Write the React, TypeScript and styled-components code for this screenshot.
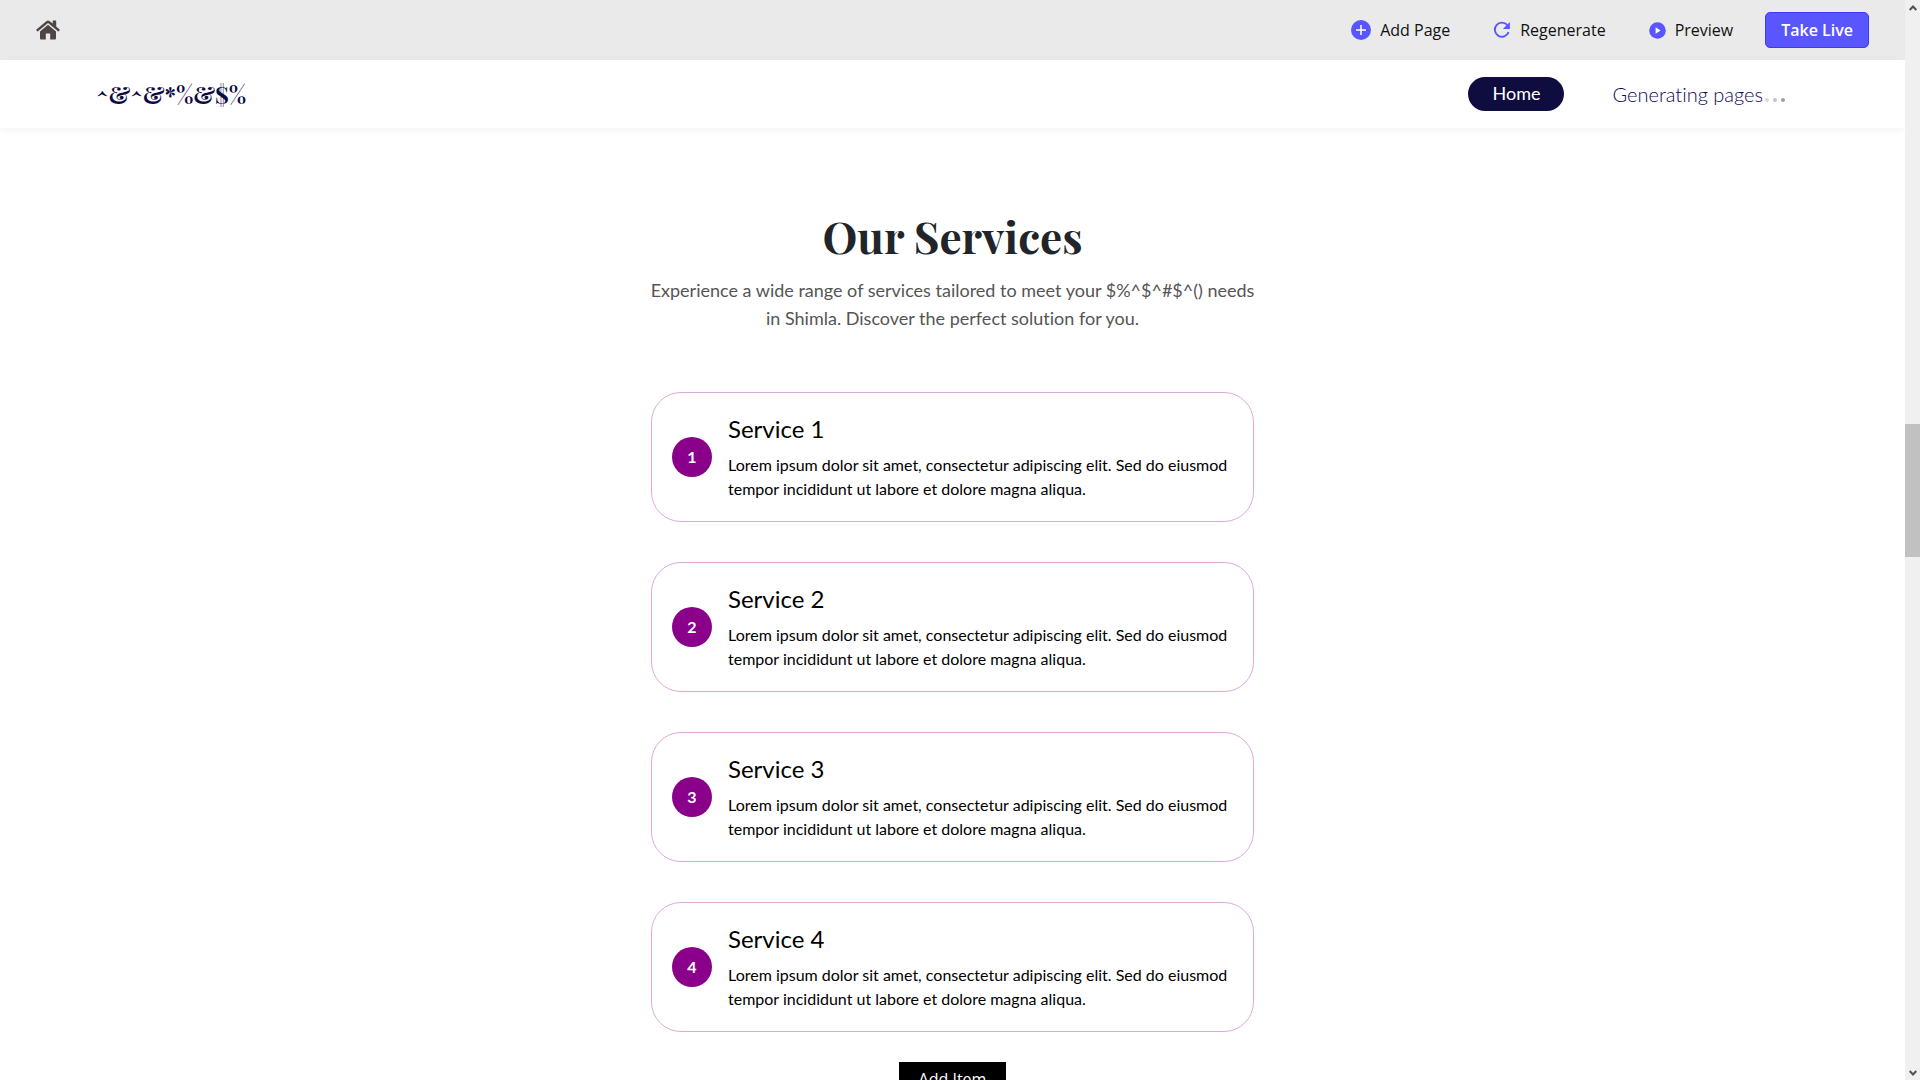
import React from "react";
import styled, { createGlobalStyle } from "styled-components";

const GlobalStyle = createGlobalStyle`
  *, *::before, *::after { box-sizing: border-box; }
  body {
    margin: 0;
    background: #fff;
    color: #000;
    font-family: Lato, "Open Sans", sans-serif;
    font-size: 16px;
    font-variant-ligatures: none;
    line-height: 24px;
  }
  h1, h2, p, ol { margin: 0; padding: 0; }
`;

const Shell = styled.div`
  display: grid;
  grid-template-columns: minmax(0, 1fr) 15px;
  height: 100vh;
  overflow: hidden;
`;

const Page = styled.div`
  display: flex;
  flex-direction: column;
  min-height: 0;
  overflow: hidden;
`;

const Toolbar = styled.header`
  flex: none;
  display: flex;
  align-items: center;
  justify-content: space-between;
  height: 60px;
  padding: 0 36px;
  background: #eaeaea;
`;

const HomeLink = styled.a`
  display: flex;
  color: #4f4545;
`;

const Actions = styled.div`
  display: flex;
  align-items: center;
  gap: 32px;
`;

const Tools = styled.div`
  display: flex;
  align-items: center;
  gap: 43px;
`;

const ToolButton = styled.button`
  display: flex;
  align-items: center;
  gap: 9px;
  padding: 0;
  border: 0;
  background: none;
  color: #111;
  font: 400 16px/24px "Open Sans", sans-serif;
`;

const LiveButton = styled.button`
  height: 36px;
  padding: 0 15px;
  border: 1px solid #4338f5;
  border-radius: 5px;
  background: #5956ff;
  color: #fff;
  font: 600 16px/24px "Open Sans", sans-serif;
`;

const SiteNav = styled.nav`
  flex: none;
  display: flex;
  align-items: center;
  justify-content: space-between;
  height: 68px;
  padding: 0 120px 0 96px;
  background: #fff;
  box-shadow: 0 2px 8px rgba(0, 0, 0, 0.05);
`;

const Brand = styled.a`
  color: #0d0a42;
  font: 700 24px/32px "Playfair Display", "Liberation Serif", serif;
  text-decoration: none;
`;

const NavItems = styled.div`
  display: flex;
  align-items: center;
  gap: 48px;
`;

const NavPill = styled.a`
  padding: 4px 24px 6px;
  border-radius: 17px;
  background: #0f0c40;
  color: #fff;
  font-size: 18px;
  line-height: 24px;
  text-decoration: none;
`;

const Status = styled.span`
  display: flex;
  align-items: baseline;
  gap: 2px;
  color: #0d0a52;
  font-size: 20px;
  font-weight: 300;
  line-height: 28px;
`;

const Dots = styled.span`
  display: flex;
  gap: 4px;
`;

const Dot = styled.i<{ $opacity: number }>`
  width: 4px;
  height: 4px;
  border-radius: 50%;
  background: #0d0a42;
  opacity: ${(p) => p.$opacity};
`;

const Services = styled.main`
  display: flex;
  flex-direction: column;
  align-items: center;
  padding: 76px 24px 0;
`;

const Title = styled.h1`
  color: #212529;
  font: 700 44px/64px "Playfair Display", "Liberation Serif", serif;
`;

const Intro = styled.p`
  max-width: 612px;
  margin-top: 8px;
  color: #555;
  font-size: 18px;
  line-height: 28px;
  text-align: center;
`;

const List = styled.ol`
  display: flex;
  flex-direction: column;
  gap: 40px;
  width: 100%;
  max-width: 603px;
  margin: 60px 0 30px;
  list-style: none;
`;

const Card = styled.li`
  display: flex;
  align-items: center;
  gap: 16px;
  padding: 20px;
  border: 1px solid #dda9dd;
  border-radius: 30px;
`;

const Badge = styled.span`
  flex: none;
  display: grid;
  place-items: center;
  width: 40px;
  height: 40px;
  border-radius: 50%;
  background: #8b008b;
  color: #fff;
  font-weight: 700;
`;

const CardTitle = styled.h2`
  margin-bottom: 8px;
  font-size: 24px;
  font-weight: 400;
  line-height: 32px;
`;

const AddButton = styled.button`
  padding: 5px 20px;
  border: 0;
  background: #000;
  color: #fff;
  font: 400 16px/24px "Open Sans", sans-serif;
`;

const ScrollTrack = styled.div`
  display: grid;
  grid-template-rows: 15px 409fr 133px 508fr 15px;
  justify-items: center;
  align-items: center;
  background: #f0f0f0;
  color: #505050;
`;

const ScrollThumb = styled.div`
  grid-row: 3;
  width: 100%;
  height: 100%;
  background: #c1c1c1;
`;

const ArrowUp = styled.svg`
  grid-row: 1;
`;

const ArrowDown = styled.svg`
  grid-row: 5;
`;

const services = ["Service 1", "Service 2", "Service 3", "Service 4"];

const HouseIcon = () => (
  <svg width="24" height="20" viewBox="0 0 24 20" fill="currentColor" aria-hidden="true">
    <path d="M12 4.7 4 11.4V18.6Q4 19.5 5 19.5H9.8V13.5H14.2V19.5H19Q20 19.5 20 18.6V11.4Z" />
    <path d="M23.6 9.5 20.2 6.6V.8Q20.2.4 19.7.4H17.2Q16.7.4 16.7.8V3.6L13.4.9Q12 0 10.6.9L.4 9.5Q0 9.9.4 10.3L1.2 11.2Q1.6 11.6 2 11.2L12 2.9 22 11.2Q22.4 11.6 22.8 11.2L23.6 10.3Q24 9.9 23.6 9.5Z" />
  </svg>
);

const PlusIcon = () => (
  <svg width="20" height="20" viewBox="0 0 20 20" aria-hidden="true">
    <circle cx="10" cy="10" r="10" fill="#5956ff" />
    <path d="M10 5v10M5 10h10" stroke="#fff" strokeWidth="1.5" />
  </svg>
);

const RefreshIcon = () => (
  <svg width="18" height="18" viewBox="0 0 18 18" aria-hidden="true">
    <path d="M14.3 4A7.1 7.1 0 1 0 15.6 11.2" fill="none" stroke="#5956ff" strokeWidth="1.9" />
    <path d="M16.9 1V8H9.9Z" fill="#5956ff" />
  </svg>
);

const PlayIcon = () => (
  <svg width="17" height="17" viewBox="0 0 17 17" aria-hidden="true">
    <circle cx="8.5" cy="8.5" r="8.3" fill="#5956ff" />
    <path d="M6.6 5.2v6.6l5-3.3z" fill="#fff" />
  </svg>
);

export default function App() {
  return (
    <Shell>
      <GlobalStyle />
      <Page>
        <Toolbar>
          <HomeLink href="#" aria-label="Dashboard"><HouseIcon /></HomeLink>
          <Actions>
            <Tools>
              <ToolButton type="button"><PlusIcon />Add Page</ToolButton>
              <ToolButton type="button"><RefreshIcon />Regenerate</ToolButton>
              <ToolButton type="button"><PlayIcon />Preview</ToolButton>
            </Tools>
            <LiveButton type="button">Take Live</LiveButton>
          </Actions>
        </Toolbar>
        <SiteNav>
          <Brand href="#">^&amp;^&amp;*%&amp;$%</Brand>
          <NavItems>
            <NavPill href="#">Home</NavPill>
            <Status>
              Generating pages
              <Dots aria-hidden="true">
                <Dot $opacity={0.15} />
                <Dot $opacity={0.25} />
                <Dot $opacity={0.4} />
              </Dots>
            </Status>
          </NavItems>
        </SiteNav>
        <Services>
          <Title>Our Services</Title>
          <Intro>
            Experience a wide range of services tailored to meet your $%^$^#$^() needs
            in Shimla. Discover the perfect solution for you.
          </Intro>
          <List>
            {services.map((name, i) => (
              <Card key={name}>
                <Badge>{i + 1}</Badge>
                <div>
                  <CardTitle>{name}</CardTitle>
                  <p>
                    Lorem ipsum dolor sit amet, consectetur adipiscing elit. Sed do eiusmod
                    tempor incididunt ut labore et dolore magna aliqua.
                  </p>
                </div>
              </Card>
            ))}
          </List>
          <AddButton type="button">Add Item</AddButton>
        </Services>
      </Page>
      <ScrollTrack aria-hidden="true">
        <ArrowUp width="8" height="6" viewBox="0 0 8 6">
          <path d="M.7 5 4 1.5 7.3 5" fill="none" stroke="currentColor" strokeWidth="2" />
        </ArrowUp>
        <ScrollThumb />
        <ArrowDown width="8" height="6" viewBox="0 0 8 6">
          <path d="M.7 1 4 4.5 7.3 1" fill="none" stroke="currentColor" strokeWidth="2" />
        </ArrowDown>
      </ScrollTrack>
    </Shell>
  );
}
